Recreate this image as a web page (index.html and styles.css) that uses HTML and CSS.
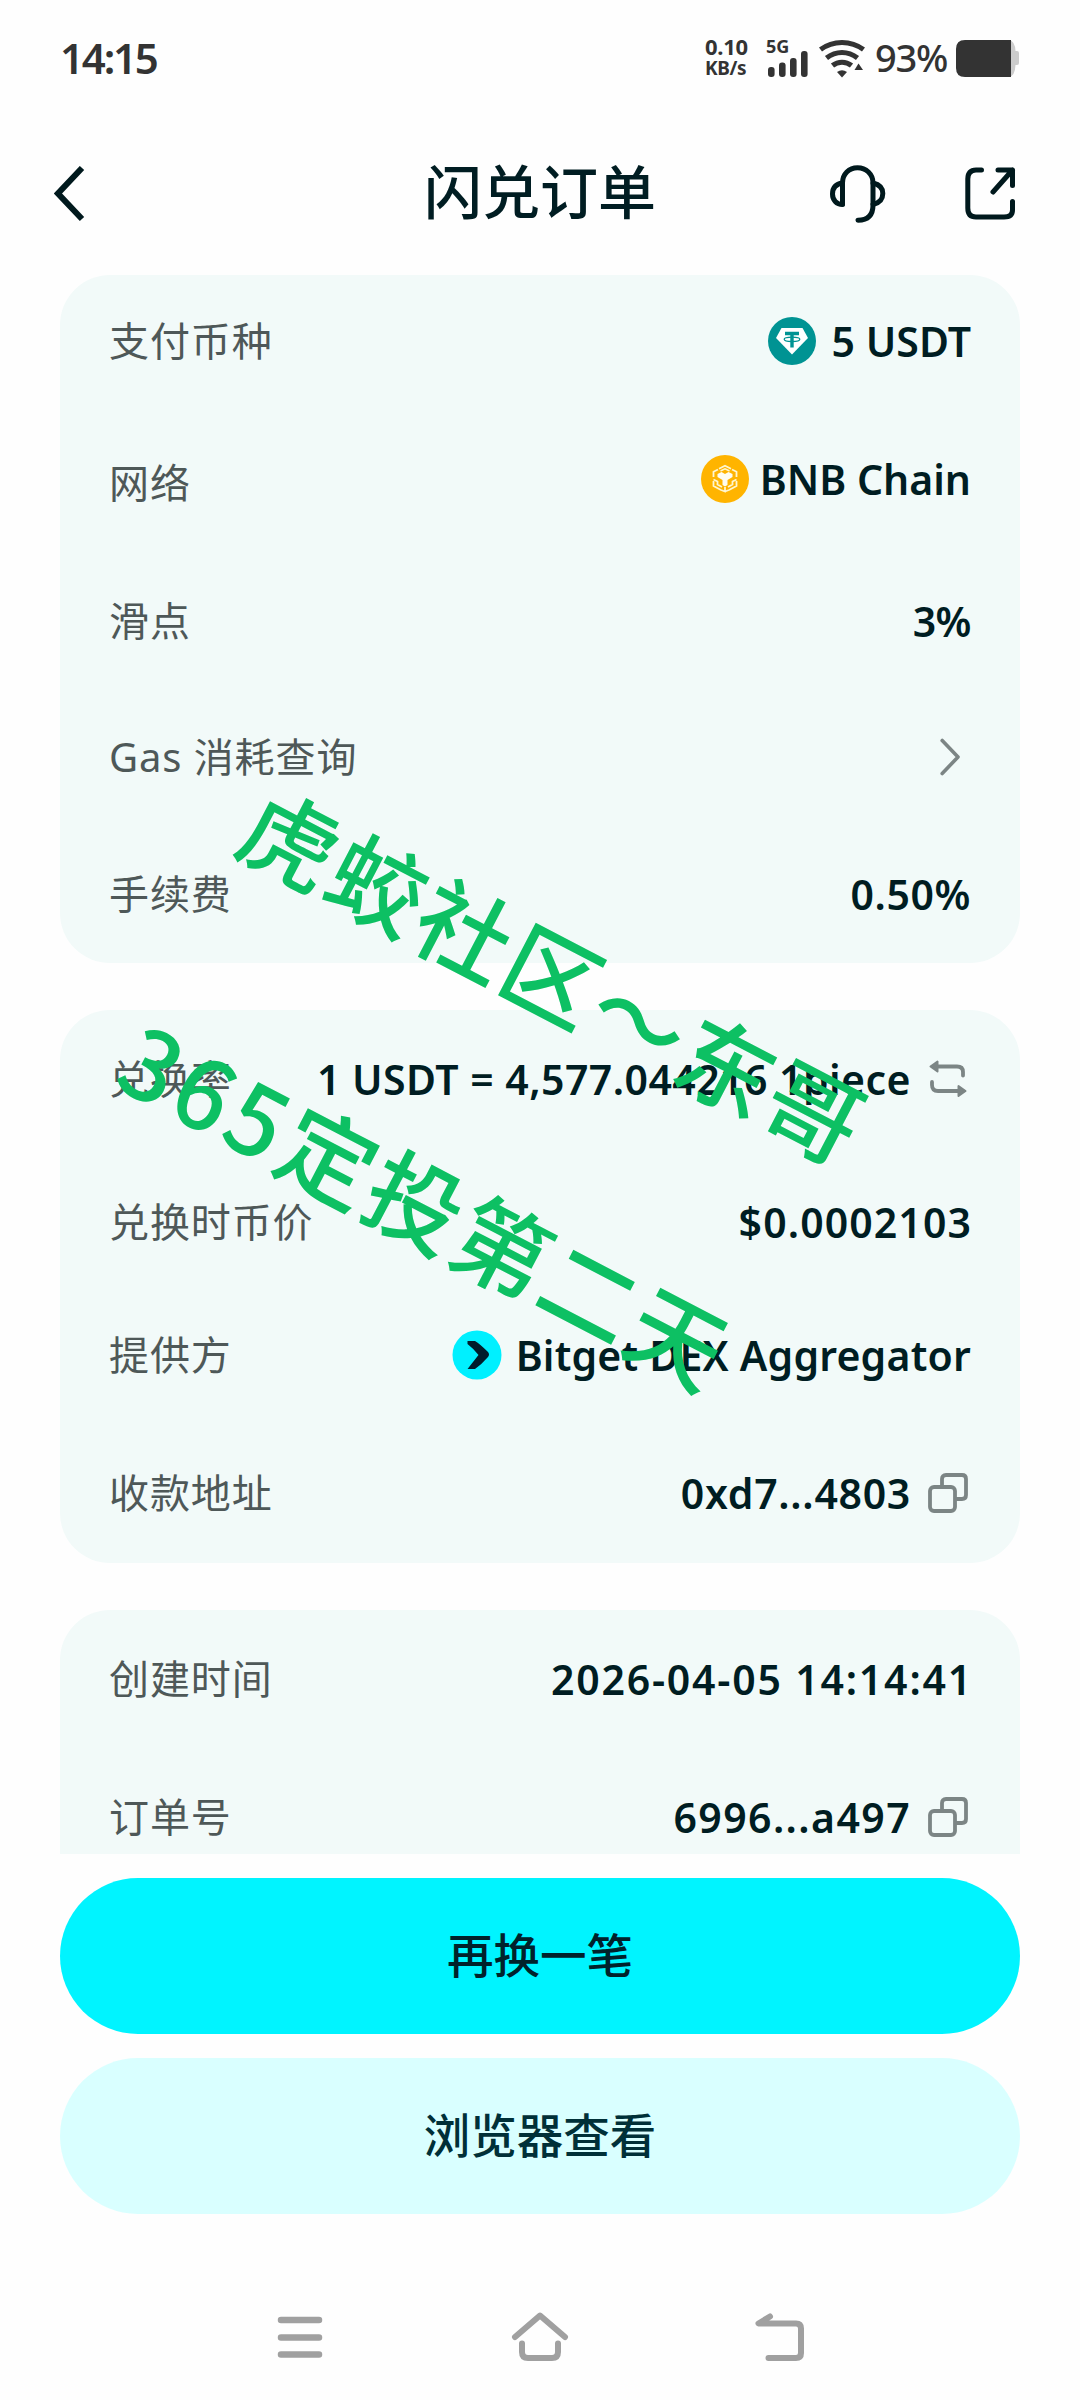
FILE: index.html
```html
<!DOCTYPE html>
<html lang="zh-CN">
<head>
<meta charset="utf-8">
<title>闪兑订单</title>
<link rel="stylesheet" href="styles.css">
</head>
<body>
<div class="screen">
  <div class="status">
    <span class="clock">14:15</span>
    <span class="speed"><span>0.10</span><span class="unit">KB/s</span></span>
    <span class="signal">
      <span class="gen">5G</span>
      <svg width="40" height="26" viewBox="0 0 40 26" fill="#333"><rect y="16" width="6.6" height="10" rx="3"/><rect x="11" y="11.500" width="6.600" height="14.500" rx="3"/><rect x="22" y="7" width="6.600" height="19" rx="3"/><rect x="33" y="0" width="6.600" height="26" rx="3"/></svg>
    </span>
    <svg class="wifi" width="46" height="40" viewBox="0 0 46 40" fill="none" stroke="#333" stroke-width="5"><path d="M1.500 10.500C14 1 32 1 44.500 10.500M7.500 19C17 11.500 29 11.500 38.500 19M13.500 26.500C19 22 27 22 32.500 26.500"/><path d="M18 33Q23 29.500 28 33L23 38.500Z" fill="#333" stroke="none"/><path d="M35.500 31L39.500 24.500L44 31Z" fill="#333" stroke="none"/></svg>
    <span class="percent">93%</span>
    <svg class="battery" width="64" height="38" viewBox="0 0 64 38"><path d="M50 0H53Q59 1 59.500 11H61Q63 11 63 13V23Q63 25 61 25H59.500Q59 36 53 37H50Z" fill="#ccc"/><path d="M9 0H55V37H9Q0 37 0 28V9Q0 0 9 0Z" fill="#333"/></svg>
  </div>

  <div class="header">
    <svg class="back" width="32" height="56" viewBox="0 0 32 56" fill="none" stroke="#00191d" stroke-width="6"><path d="M28 2L4 27.500L28 53"/></svg>
    <h1>闪兑订单</h1>
    <svg class="support" width="56" height="58" viewBox="0 0 56 58" fill="none" stroke="#00191d" stroke-width="5" stroke-linecap="round" stroke-linejoin="round"><path d="M12.500 39V18C12.500 9 19 2.800 27.500 2.800S43 9 43 18V40Q43 55 28 55.300"/><path d="M12.500 18C6 19 2.500 23 2.500 29S6.500 39.500 12.500 39.500M43 18C49.500 19.500 52.800 23 52.800 28.500S49.500 38 43 39.500"/></svg>
    <svg class="share" width="52" height="54" viewBox="0 0 52 54" fill="none" stroke="#00191d" stroke-width="5" stroke-linecap="round" stroke-linejoin="round"><path d="M16.500 3H11Q2.800 3 2.800 12V41Q2.800 50 11 50H39Q47.500 50 47.500 43V34.500M33 3H47.500V18.500M47.500 3L28 25"/></svg>
  </div>

  <div class="details">
    <div class="card card-pay">
      <div class="row"><span class="label">支付币种</span>
        <span class="value v-usdt"><svg width="48" height="48" viewBox="0 0 48 48"><circle cx="24" cy="24" r="24" fill="#009393"/><path d="M13.500 11H34.500L40 21L24 37.500L8 21Z" fill="#fff"/><path d="M17 16.500H31M24 16.500V30.500" stroke="#009393" stroke-width="3.400"/><ellipse cx="24" cy="22.300" rx="7.800" ry="2.200" fill="none" stroke="#009393" stroke-width="1.300"/></svg><span>5 USDT</span></span></div>
      <div class="row row-network"><span class="label">网络</span>
        <span class="value v-bnb"><svg width="48" height="48" viewBox="0 0 48 48"><circle cx="24" cy="24" r="24" fill="#ffb400"/><g fill="none" stroke="#fff6cf" stroke-width="1.800"><path d="M18 13.800L24 10.800L30 13.800M12.500 22V16.800L17 14.500M35.500 22V16.800L31 14.500M12.500 26V31L20 35M35.500 26V31L28 35M24 32V36.500L20 35M24 36.500L28 35M12.500 24.500L16.500 26.500V29.500L21 32M35.500 24.500L31.500 26.500V29.500L27 32"/></g><path d="M16.500 19L20.500 17L24 19L27.500 17L31.500 19V22L26.500 25V30L24 31.500L21.500 30V25L16.500 22Z" fill="#fffdf0"/><path d="M19.500 16L24 13.800L28.500 16" fill="none" stroke="#fff6cf" stroke-width="1.400"/></svg><span>BNB Chain</span></span></div>
      <div class="row"><span class="label">滑点</span><span class="value v-slip">3%</span></div>
      <div class="row"><span class="label">Gas 消耗查询</span><svg class="chevron" width="21" height="38" viewBox="0 0 21 38" fill="none" stroke="#7c8585" stroke-width="3.600" stroke-linecap="round" stroke-linejoin="round"><path d="M2.200 2.500L18 19L2.200 35.500"/></svg></div>
      <div class="row"><span class="label">手续费</span><span class="value v-fee">0.50%</span></div>
    </div>

    <div class="card card-rate">
      <div class="row"><span class="label">兑换率</span>
        <span class="value v-rate"><span>1 USDT = 4,577.044216 1piece</span><svg class="swap" width="38" height="38" viewBox="0 0 38 38" fill="none" stroke="#7c8585" stroke-width="3.800" stroke-linecap="round"><path d="M7 6.500H28Q34 6.500 34 12V15.500M3 22V25Q3 31 9 31H30"/><path d="M1.500 6.500L8.500 1.500V11.500ZM36.500 31L29.500 26V36Z" fill="#7c8585" stroke-width="2" stroke-linejoin="round"/></svg></span></div>
      <div class="row"><span class="label">兑换时币价</span><span class="value v-price">$0.0002103</span></div>
      <div class="row"><span class="label">提供方</span>
        <span class="value v-dex"><svg width="50" height="50" viewBox="0 0 50 50"><circle cx="25" cy="25" r="24.500" fill="#00f0ff"/><path d="M15.500 11H23Q28 14 36 22Q38 24.500 36 27Q30 34 23 39H15.500L26.500 25Q22 19 15.500 14Z" fill="#001d2b"/></svg><span>Bitget DEX Aggregator</span></span></div>
      <div class="row row-address"><span class="label">收款地址</span>
        <span class="value v-address"><span>0xd7...4803</span><svg class="copy" width="40" height="40" viewBox="0 0 40 40" fill="none" stroke="#7c8585" stroke-width="3.800"><rect x="2" y="14" width="25" height="24" rx="4"/><path d="M14 14V6Q14 2 18 2H34Q38 2 38 6V22Q38 26 34 26H27"/></svg></span></div>
    </div>

    <div class="card card-order">
      <div class="row"><span class="label">创建时间</span><span class="value v-time">2026-04-05 14:14:41</span></div>
      <div class="row"><span class="label">订单号</span>
        <span class="value v-order"><span>6996...a497</span><svg class="copy" width="40" height="40" viewBox="0 0 40 40" fill="none" stroke="#7c8585" stroke-width="3.800"><rect x="2" y="14" width="25" height="24" rx="4"/><path d="M14 14V6Q14 2 18 2H34Q38 2 38 6V22Q38 26 34 26H27"/></svg></span></div>
    </div>
  </div>

  <div class="actions">
    <button class="btn primary">再换一笔</button>
    <button class="btn secondary">浏览器查看</button>
  </div>

  <div class="navbar">
    <svg width="60" height="56" viewBox="0 0 60 56" fill="none" stroke="#a0a0a0" stroke-width="6.500" stroke-linecap="round"><path d="M11 11H49M11 28.500H49M11 45.500H49"/></svg>
    <svg width="60" height="56" viewBox="0 0 60 56" fill="none" stroke="#a0a0a0" stroke-width="6" stroke-linecap="round" stroke-linejoin="round"><path d="M5 28L30 6.500L55 28M12 34.500V43Q12 49 18 49H42Q48 49 48 43V34.500"/></svg>
    <svg width="60" height="56" viewBox="0 0 60 56" fill="none" stroke="#a0a0a0" stroke-width="6" stroke-linecap="round" stroke-linejoin="round"><path d="M20 7.500L8.500 14.500H46Q51 14.500 51 19.500V44Q51 49 46 49H18.500"/></svg>
  </div>

  <div class="mark mark-one">虎蛟社区～东哥</div>
  <div class="mark mark-two"><span class="digits">365</span>定投第二天</div>
</div>
</body>
</html>
```
FILE: styles.css
```css
* { box-sizing: border-box; }
body {
  margin: 0;
  background: #fefefe;
  font-family: "Noto Sans", "Noto Sans CJK SC", sans-serif;
  color: #001d22;
}
svg { display: block; flex: none; }
.screen {
  position: relative;
  width: 1080px;
  height: 2400px;
  overflow: hidden;
  display: flex;
  flex-direction: column;
}

.status {
  height: 118px;
  flex: none;
  padding: 0 60px 4px;
  display: flex;
  align-items: center;
  color: #333;
  white-space: nowrap;
}
.clock { font-size: 42px; font-weight: 600; letter-spacing: -2.200px; margin-right: auto; }
.speed {
  width: 42px;
  margin-right: 21px;
  display: flex;
  flex-direction: column;
  font-size: 22px;
  line-height: 22px;
  font-weight: 700;
  letter-spacing: -0.3px;
}
.unit { font-size: 19px; letter-spacing: -0.4px; }
.signal { width: 42px; margin-right: 9px; display: flex; flex-direction: column; gap: 1px; }
.gen { font-size: 18px; font-weight: 700; line-height: 12px; margin-left: -2px; padding-top: 2px; height: 12px; }
.wifi { margin: 4px 10px 0 0; }
.percent { font-size: 38px; font-weight: 500; letter-spacing: -1.2px; width: 73px; margin-right: 8px; }
.battery { margin-top: 4px; }

.header {
  height: 157px;
  flex: none;
  padding: 0 63px 10px 54px;
  display: flex;
  align-items: center;
}
.back { margin-top: 5px; }
h1 { margin: 0 auto 0 338px; font-size: 58px; line-height: 70px; font-weight: 500; white-space: nowrap; }
.support { margin: 5px 79px 0 0; }
.share { margin-top: 5px; }

.details {
  height: 1579px;
  flex: none;
  overflow: hidden;
  padding: 0 60px;
}
.card {
  background: #f2faf9;
  border-radius: 50px;
  padding: 0 49px;
  display: grid;
}
.card-pay { height: 688px; grid-template-rows: 132px 148px 132px 139px 135px; }
.card-rate { height: 553px; margin-top: 47px; grid-template-rows: 138px 148px 118px 149px; }
.card-order { height: 340px; margin-top: 47px; grid-template-rows: 138px 138px; align-content: start; }
.row { display: flex; align-items: center; justify-content: space-between; white-space: nowrap; }
.label { font-size: 40px; line-height: 48px; letter-spacing: 0.9px; color: #4e5858; }
.value { display: flex; align-items: center; font-size: 41px; line-height: 48px; font-weight: 600; }
.row-network .label { padding-top: 3px; }
.row-network .value { padding-bottom: 4px; }
.row-address { padding-top: 8px; }
.chevron { margin-right: 10px; }
.swap { margin-left: 18px; margin-right: 4px; }
.copy { margin-left: 17px; margin-right: 3px; }
.v-usdt svg { margin-right: 16px; }
.v-bnb svg { margin-right: 11px; }
.v-dex svg { margin-right: 14px; }
.v-slip { letter-spacing: -0.5px; }
.v-fee { letter-spacing: 0.6px; }
.v-rate { letter-spacing: 0.45px; }
.v-price { letter-spacing: 1.100px; margin-right: -1px; }
.v-dex { letter-spacing: 0.2px; }
.v-address { letter-spacing: 0.7px; }
.v-time { letter-spacing: 1.800px; margin-right: -2px; }
.v-order { letter-spacing: 1.400px; }

.actions {
  padding: 24px 60px 0;
  display: flex;
  flex-direction: column;
  gap: 24px;
}
.btn {
  height: 156px;
  border: 0;
  border-radius: 78px;
  padding: 0 0 7px;
  font-family: inherit;
  font-size: 46.500px;
  font-weight: 500;
  color: #00222b;
}
.primary { background: #00f4ff; }
.secondary { background: #d9ffff; color: #003038; }

.navbar {
  margin-top: auto;
  height: 91px;
  flex: none;
  padding: 0 270px;
  display: flex;
  justify-content: space-between;
}

.mark {
  position: absolute;
  font-family: "Noto Sans CJK SC", sans-serif;
  font-size: 96px;
  line-height: 90px;
  letter-spacing: 2.300px;
  font-weight: 500;
  color: #0dc063;
  white-space: nowrap;
  transform-origin: 0 50%;
  transform: rotate(27.500deg);
}
.digits { letter-spacing: 4.500px; }
.mark-one { left: 250px; top: 769px; }
.mark-two { left: 130px; top: 1004px; }
```
